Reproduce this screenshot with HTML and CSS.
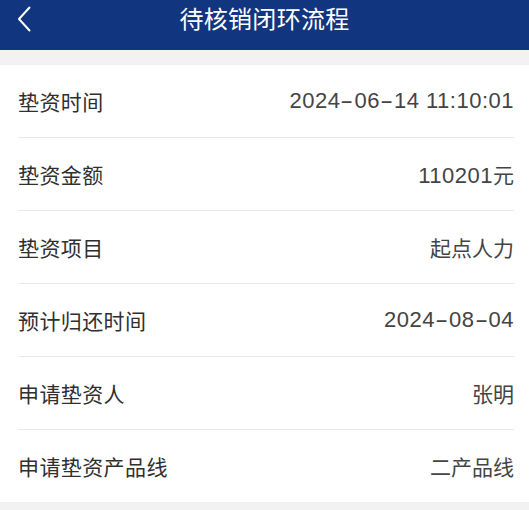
FILE: index.html
```html
<!DOCTYPE html>
<html lang="zh-CN">
<head>
<meta charset="utf-8">
<link rel="stylesheet" href="styles.css">
</head>
<body>
<div class="page">
  <header class="nav">
    <span class="back">
      <svg width="14" height="26" viewBox="0 0 14 26"><path d="M12.5 1.5 L2 13 L12.5 24.5" fill="none" stroke="#fff" stroke-width="2" stroke-linecap="round" stroke-linejoin="round"/></svg>
    </span>
    <h1 class="title">待核销闭环流程</h1>
  </header>
  <div class="gap"></div>
  <section class="card">
    <div class="row"><span class="label">垫资时间</span><span class="value num">2024<span class="dash">-</span>06<span class="dash">-</span>14 11:10:01</span></div>
    <div class="row"><span class="label">垫资金额</span><span class="value num">110201<span class="cjk">元</span></span></div>
    <div class="row"><span class="label">垫资项目</span><span class="value">起点人力</span></div>
    <div class="row"><span class="label">预计归还时间</span><span class="value num">2024<span class="dash">-</span>08<span class="dash">-</span>04</span></div>
    <div class="row"><span class="label">申请垫资人</span><span class="value">张明</span></div>
    <div class="row"><span class="label">申请垫资产品线</span><span class="value">二产品线</span></div>
  </section>
</div>
</body>
</html>
```
FILE: styles.css
```css
html, body {
  margin: 0;
  padding: 0;
  background: #f2f2f2;
  font-family: "Noto Sans CJK SC", "Noto Sans", sans-serif;
}
.page {
  width: 529px;
  height: 510px;
  background: #f2f2f2;
  overflow: hidden;
}
.nav {
  height: 50px;
  background: #11357f;
  display: flex;
  align-items: center;
  justify-content: center;
  position: relative;
}
.back {
  position: absolute;
  left: 17px;
  top: 6px;
  display: flex;
}
.title {
  margin: 0;
  margin-top: -14px;
  color: #fff;
  font-weight: 400;
  font-size: 24px;
  line-height: 1;
  letter-spacing: 0.3px;
}
.gap {
  height: 15px;
}
.card {
  background: #fff;
  padding: 0 15px 0 18px;
}
.row {
  height: 72px;
  display: flex;
  align-items: center;
  justify-content: space-between;
  border-bottom: 1px solid #e8e8e8;
}
.row:last-child {
  border-bottom: none;
}
.label {
  font-size: 21px;
  color: #2f2f2f;
  margin-top: -1px;
  letter-spacing: 0.4px;
}
.value {
  font-size: 21px;
  color: #444;
  margin-top: -1px;
}
.num {
  font-family: "Liberation Sans", "Noto Sans CJK SC", sans-serif;
  font-size: 22px;
  letter-spacing: 0.5px;
}
.cjk {
  font-family: "Noto Sans CJK SC", sans-serif;
  font-size: 21px;
  letter-spacing: 0;
}
.dash {
  display: inline-block;
  width: 14px;
  text-align: center;
  transform: scaleX(1.8);
}
```
